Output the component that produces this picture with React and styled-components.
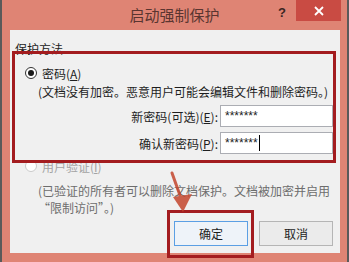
import React from "react";
import styled, { createGlobalStyle } from "styled-components";

const GlobalStyle = createGlobalStyle`
  html, body {
    margin: 0;
    padding: 0;
    overflow: hidden;
  }
  body {
    font-family: "Noto Sans CJK SC", "Noto Sans", sans-serif;
    font-size: 12px;
    color: #1e1e1e;
  }
`;

const Window = styled.div`
  width: 349px;
  height: 262px;
  box-sizing: border-box;
  background: #df8474;
  border-left: 2px solid #5a5a5a;
  border-right: 2px solid #5a5a5a;
  display: flex;
  flex-direction: column;
`;

const TitleBar = styled.div`
  height: 30px;
  flex: none;
  display: grid;
  grid-template-columns: 1fr auto 1fr;
  align-items: start;
`;

const Title = styled.div`
  grid-column: 2;
  line-height: 30px;
  font-size: 15px;
  color: #5a3530;
`;

const Controls = styled.div`
  grid-column: 3;
  justify-self: end;
  display: flex;
  align-items: flex-start;
  margin-right: 6px;
`;

const Help = styled.div`
  width: 16px;
  margin-right: 6px;
  line-height: 26px;
  text-align: center;
  font-family: "Liberation Sans", sans-serif;
  font-weight: bold;
  font-size: 13px;
  color: #3a2622;
`;

const CloseButton = styled.div`
  width: 45px;
  height: 21px;
  background: #c94b43;
  display: flex;
  align-items: center;
  justify-content: center;
`;

const Content = styled.div`
  position: relative;
  height: 223px;
  margin: 0 7px 0 8px;
  background: #f0f0f0;
`;

const GroupLabel = styled.div`
  height: 9px;
  padding: 12px 0 0 5px;
  line-height: 14px;
  overflow: visible;
  color: #222;
`;

const Highlight = styled.div`
  position: relative;
  border: 3px solid #a31c1f;
`;

const MethodBox = styled(Highlight)`
  margin: 0 4px 0 2px;
  padding: 12px 0 6px 0;
`;

const RadioRow = styled.div`
  display: flex;
  align-items: center;
  height: 14px;
  gap: 5px;
  padding-left: ${(p) => p.$indent}px;
  margin-top: ${(p) => p.$top || 0}px;
  color: ${(p) => (p.$disabled ? "#a3a3a3" : "#1e1e1e")};
`;

const Radio = styled.span`
  box-sizing: border-box;
  width: 12px;
  height: 12px;
  border-radius: 50%;
  border: 1px solid ${(p) => (p.$disabled ? "#cacaca" : "#333")};
  background: #fff;
  display: flex;
  align-items: center;
  justify-content: center;
  &::after {
    content: "";
    display: ${(p) => (p.$checked ? "block" : "none")};
    width: 6px;
    height: 6px;
    border-radius: 50%;
    background: #1a1a1a;
  }
`;

const Key = styled.span`
  text-decoration: underline;
  text-underline-offset: 1px;
`;

const Note = styled.div`
  padding-left: ${(p) => p.$indent}px;
  margin-top: ${(p) => p.$top}px;
  line-height: ${(p) => p.$lh}px;
  color: ${(p) => p.$color || "#1e1e1e"};
  white-space: nowrap;
`;

const FieldRow = styled.div`
  display: flex;
  justify-content: flex-end;
  align-items: center;
  margin-top: 5px;
`;

const FieldLabel = styled.span`
  margin-right: 2px;
  color: #1e1e1e;
`;

const Input = styled.div`
  box-sizing: border-box;
  width: 113px;
  height: 22px;
  border: 1px solid #abadb3;
  background: #fff;
  padding-left: 4px;
  display: flex;
  align-items: center;
  font-family: "Liberation Sans", sans-serif;
  font-size: 12px;
  color: #222;
`;

const Caret = styled.span`
  width: 1px;
  height: 16px;
  background: #000;
  margin-left: 1px;
`;

const ButtonRow = styled.div`
  display: flex;
  justify-content: flex-end;
  align-items: flex-start;
  margin-top: -6px;
  padding-right: 7px;
`;

const ButtonFrame = styled(Highlight)`
  padding: 8px 3px 9px 4px;
  margin-right: 5px;
`;

const Button = styled.div`
  box-sizing: border-box;
  width: 74px;
  height: 25px;
  margin-top: ${(p) => p.$top || 0}px;
  display: flex;
  align-items: center;
  justify-content: center;
  border: 1px solid ${(p) => (p.$primary ? "#5b9fe4" : "#b5b5b5")};
  background: ${(p) => (p.$primary ? "#eef3f9" : "#ebebeb")};
  color: #1e1e1e;
`;

const Arrow = styled.svg`
  position: absolute;
  left: 158px;
  top: 140px;
  opacity: 0.85;
`;

export default function App() {
  return (
    <>
      <GlobalStyle />
      <Window>
        <TitleBar>
          <Title>启动强制保护</Title>
          <Controls>
            <Help>?</Help>
            <CloseButton>
              <svg width="10" height="10" viewBox="0 0 10 10">
                <path d="M1 1 L9 9 M9 1 L1 9" stroke="#fff" strokeWidth="1.8" />
              </svg>
            </CloseButton>
          </Controls>
        </TitleBar>
        <Content>
          <GroupLabel>保护方法</GroupLabel>
          <MethodBox>
            <RadioRow $indent={10}>
              <Radio $checked />
              <span>
                密码(<Key>A</Key>)
              </span>
            </RadioRow>
            <Note $indent={23} $top={4} $lh={16}>
              (文档没有加密。恶意用户可能会编辑文件和删除密码。)
            </Note>
            <FieldRow>
              <FieldLabel>
                新密码(可选)(<Key>E</Key>):
              </FieldLabel>
              <Input>*******</Input>
            </FieldRow>
            <FieldRow>
              <FieldLabel>
                确认新密码(<Key>P</Key>):
              </FieldLabel>
              <Input>
                *******
                <Caret />
              </Input>
            </FieldRow>
          </MethodBox>
          <RadioRow $indent={15} $top={-4} $disabled>
            <Radio $disabled />
            <span>
              用户验证(<Key>I</Key>)
            </span>
          </RadioRow>
          <Note $indent={28} $top={9} $lh={17} $color="#6d6d6d">
            (已验证的所有者可以删除文档保护。文档被加密并启用
            <br />
            “限制访问”。)
          </Note>
          <ButtonRow>
            <ButtonFrame>
              <Button $primary>确定</Button>
            </ButtonFrame>
            <Button $top={11}>取消</Button>
          </ButtonRow>
          <Arrow width="28" height="44" viewBox="0 0 28 44">
            <path d="M4 3 L14 31" stroke="#c4462e" strokeWidth="3" strokeLinecap="round" />
            <path d="M15 42 L5 27 L24 24 Z" fill="#c4462e" />
          </Arrow>
        </Content>
      </Window>
    </>
  );
}
